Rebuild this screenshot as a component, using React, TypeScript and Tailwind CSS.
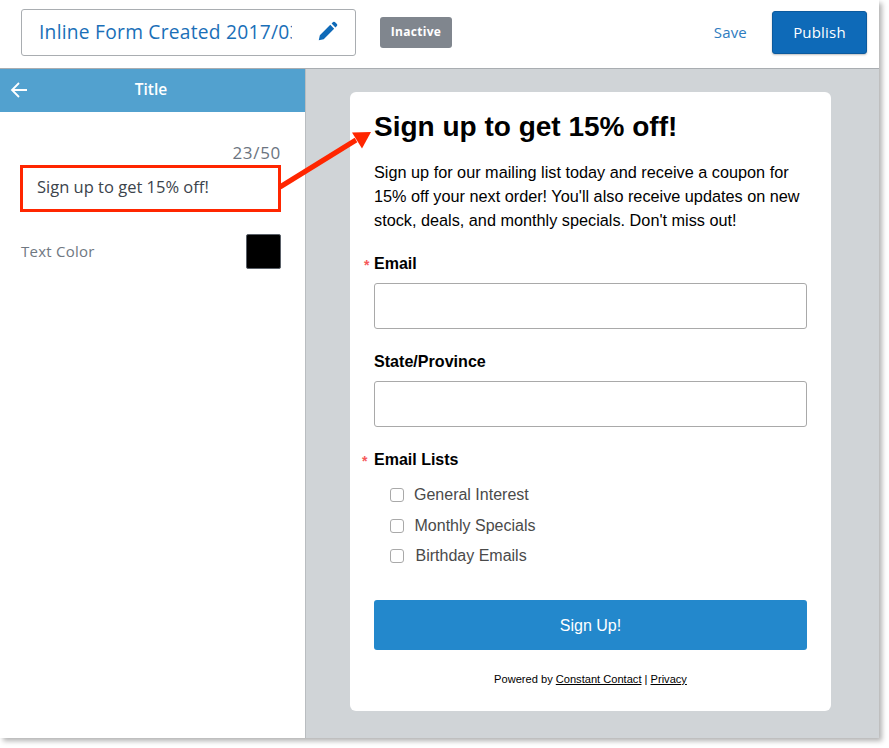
import React from "react";

const ui = { fontFamily: '"Open Sans", sans-serif' };
const form = { fontFamily: '"Liberation Sans", Arial, sans-serif' };

function Req({ children, left }: { children: string; left: string }) {
  return (
    <div className="relative text-[16px] leading-[20px] font-bold text-black">
      <span className={`absolute top-[1px] text-[14px] font-bold text-[#f6595a] ${left}`}>*</span>
      {children}
    </div>
  );
}

function Check({ label, gap }: { label: string; gap: string }) {
  return (
    <div className="flex items-center h-[20px] pl-[16px]">
      <span className="w-[14px] h-[14px] rounded-[3px] border border-[#a9a9a9] bg-white shrink-0" />
      <span className={`text-[16px] text-[#4a4a4a] ${gap}`}>{label}</span>
    </div>
  );
}

export default function App() {
  return (
    <div className="w-[889px] h-[748px] bg-white">
      <div className="relative w-[879px] h-[738px] flex flex-col shadow-[3px_3px_5px_rgba(0,0,0,0.3)]" style={ui}>
        <header className="h-[69px] shrink-0 flex items-center border-b border-[#a9adb1] bg-white pl-[21px] pr-[12px] pb-[4px]">
          <div className="w-[335px] h-[47px] flex items-center justify-between rounded-[3px] border border-[#a9adb1] pl-[17px] pr-[17px]">
            <span className="w-[253px] overflow-hidden whitespace-nowrap text-[19.2px] text-[#1a6fb8] tracking-[0.25px]">Inline Form Created 2017/03/01</span>
            <svg width="22" height="22" viewBox="0 0 24 24" fill="#0f6ab8"><path d="M3 21l1.2-5.4L15.6 4.2l4.2 4.2L8.4 19.8 3 21zM17 2.8l1.6-1.6a1.4 1.4 0 0 1 2 0l2.2 2.2a1.4 1.4 0 0 1 0 2l-1.6 1.6L17 2.8z" /></svg>
          </div>
          <span className="ml-[24px] w-[72px] h-[31px] flex items-center justify-center rounded-[3px] bg-[#80868e] text-white text-[12px] font-bold tracking-[0.3px]">Inactive</span>
          <span className="ml-auto text-[#2e7cc0] text-[15px] tracking-[0.2px]">Save</span>
          <button className="ml-[25px] w-[95px] h-[43px] rounded-[3px] bg-[#0e6ab8] border border-[#0b5a9e] text-white text-[15px] tracking-[0.2px] shadow-[0_1px_2px_rgba(0,0,0,0.25)]" style={ui}>Publish</button>
        </header>
        <div className="flex flex-1 min-h-0">
          <aside className="w-[305px] shrink-0 bg-white">
            <div className="relative h-[43px] flex items-center justify-center bg-[#52a1cf] text-white text-[15.5px] font-semibold pb-[1px] pr-[3px]">
              <svg className="absolute left-[10px] top-[12px]" width="18" height="18" viewBox="0 0 18 18" fill="none" stroke="white" strokeWidth="1.8"><path d="M17 9H2M9 2L2 9l7 7" /></svg>
              Title
            </div>
            <div className="pl-[20px] pr-[24px]">
              <div className="mt-[30px] text-right text-[17px] leading-[22px] text-[#6b7480] tracking-[0.7px]">23/50</div>
              <div className="mt-[1px] h-[47px] flex items-center border-[3px] border-[#ff2600] pl-[14px] pb-[2px] text-[16.5px] text-[#3c444c]">Sign up to get 15% off!</div>
              <div className="mt-[22px] flex items-center justify-between">
                <span className="text-[15px] text-[#6f7882] pl-[1px] tracking-[0.25px]">Text Color</span>
                <span className="w-[35px] h-[35px] rounded-[2px] bg-black border border-[#5a6068]" />
              </div>
            </div>
          </aside>
          <main className="flex-1 bg-[#d0d4d7] border-l border-[#b9bdc0] pt-[23px] pl-[44px]">
            <div className="w-[481px] h-[619px] rounded-[6px] bg-white px-[24px] pt-[17px]" style={form}>
              <h1 className="text-[28px] leading-[36px] font-bold text-black">Sign up to get 15% off!</h1>
              <p className="mt-[15px] text-[16.25px] leading-[24px] text-black">Sign up for our mailing list today and receive a coupon for 15% off your next order! You'll also receive updates on new stock, deals, and monthly specials. Don't miss out!</p>
              <div className="mt-[22px]"><Req left="left-[-10px]">Email</Req></div>
              <div className="mt-[9px] h-[46px] rounded-[3px] border border-[#a9a9a9]" />
              <div className="mt-[22px] text-[16.1px] leading-[20px] font-bold text-black">State/Province</div>
              <div className="mt-[10px] h-[46px] rounded-[3px] border border-[#a9a9a9]" />
              <div className="mt-[23px]"><Req left="left-[-12px]">Email Lists</Req></div>
              <div className="mt-[15px] flex flex-col gap-[10.5px]">
                <Check label="General Interest" gap="ml-[10px]" />
                <Check label="Monthly Specials" gap="ml-[10.5px]" />
                <Check label="Birthday Emails" gap="ml-[11.5px]" />
              </div>
              <button className="mt-[34px] w-full h-[50px] rounded-[3px] bg-[#2388cc] text-white text-[16px] pt-[1px]" style={form}>Sign Up!</button>
              <div className="mt-[21px] text-center text-[11.1px] leading-[16px] text-black">
                Powered by <span className="underline">Constant Contact</span> | <span className="underline">Privacy</span>
              </div>
            </div>
          </main>
        </div>
        <svg className="absolute left-[276px] top-[125px]" width="100" height="68" viewBox="0 0 100 68">
          <path d="M4 62L80 15" stroke="#ff2600" strokeWidth="5" fill="none" />
          <path d="M95 7L76 7.5L86 23.5Z" fill="#ff2600" />
        </svg>
      </div>
    </div>
  );
}
